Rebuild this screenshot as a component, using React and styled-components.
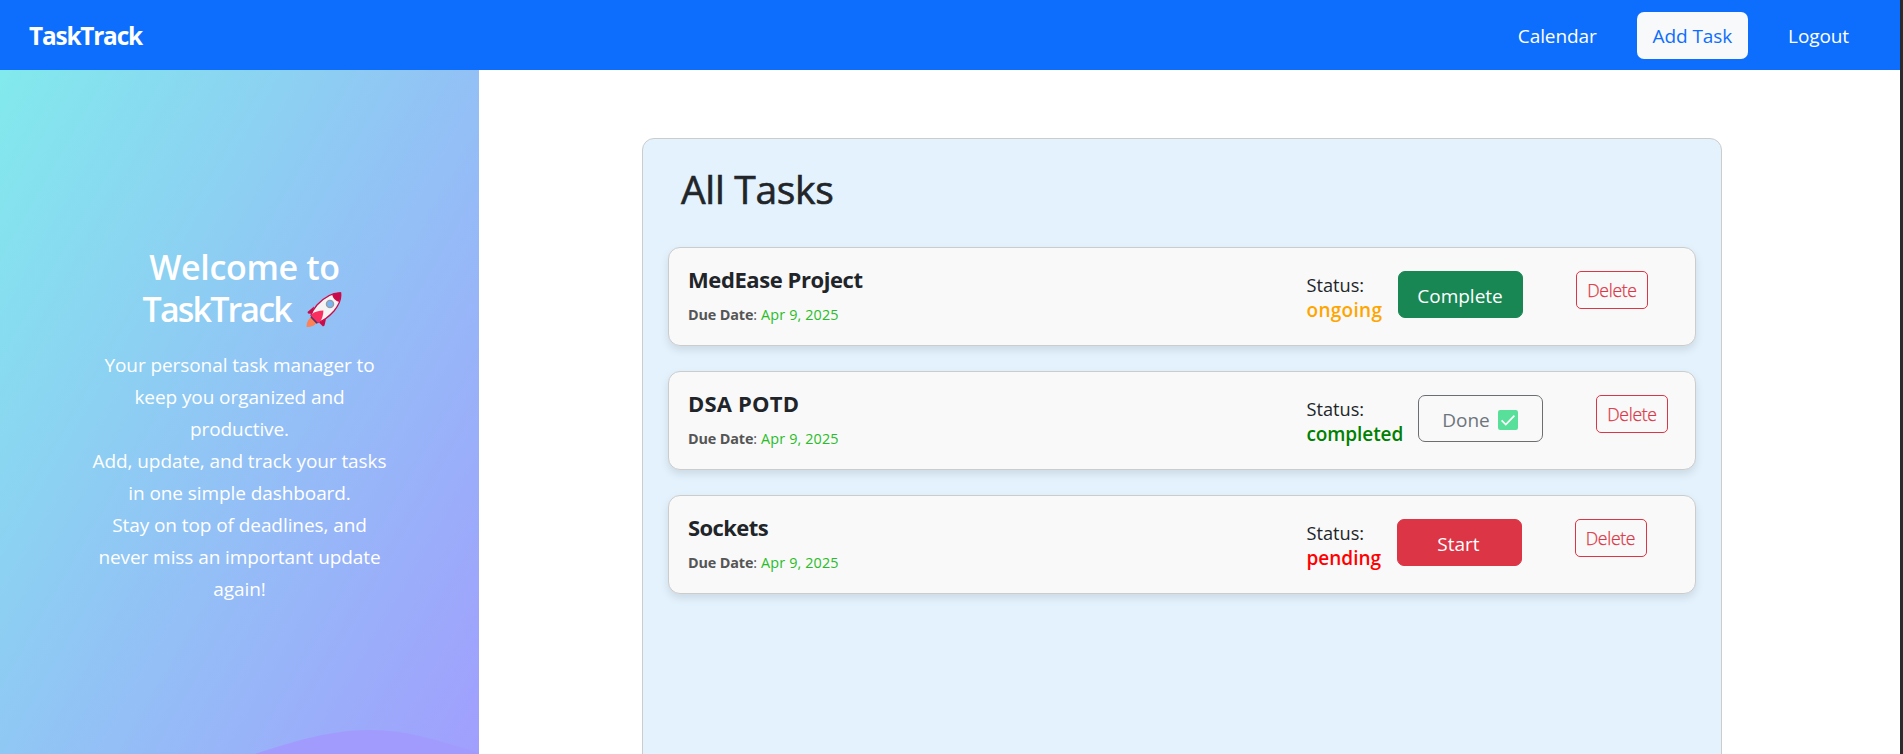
import React from "react";
import styled, { createGlobalStyle } from "styled-components";

const Global = createGlobalStyle`
  *, *::before, *::after { box-sizing: border-box; }
  body {
    margin: 0;
    overflow: hidden;
    background: #fff;
    color: #212529;
    font-family: "Open Sans", "Noto Sans", sans-serif;
  }
  h1, h2, h3, p { margin: 0; }
  button { font-family: inherit; cursor: pointer; }
`;

const Screen = styled.div`
  display: flex;
  height: 100vh;
  overflow: hidden;
  border-right: 3px solid #2b2b2b;
`;

const Page = styled.div`
  flex: 1;
  display: flex;
  flex-direction: column;
`;

const Navbar = styled.nav`
  display: flex;
  justify-content: space-between;
  align-items: center;
  flex: none;
  height: 70px;
  padding: 1px 35px 0 29px;
  background: #0d6efd;
`;

const Brand = styled.span`
  color: #fff;
  font-size: 24.4px;
  font-weight: 700;
  letter-spacing: -1.2px;
`;

const NavLinks = styled.div`
  display: flex;
  align-items: center;
  gap: 24px;
`;

const NavButton = styled.button`
  height: 47px;
  padding: 0 16px;
  border: 0;
  border-radius: 7px;
  font-size: 19px;
  letter-spacing: -0.1px;
  background: ${(p) => (p.$filled ? "#f8f9fa" : "transparent")};
  color: ${(p) => (p.$filled ? "#0d6efd" : "#fff")};
`;

const Body = styled.div`
  flex: 1;
  display: flex;
  min-height: 0;
`;

const Sidebar = styled.aside`
  display: flex;
  flex-direction: column;
  justify-content: space-between;
  align-items: center;
  width: 479px;
  padding-top: 176px;
  background: linear-gradient(120deg, #81ecec -3%, #a29bfe) top / 100% 754px no-repeat;
  color: #fff;
  text-align: center;
`;

const Welcome = styled.h2`
  padding-left: 10px;
  margin-bottom: 19px;
  font-size: 34px;
  font-weight: 600;
  line-height: 42px;
  letter-spacing: -0.35px;
`;

const AppName = styled.span`
  letter-spacing: -1.85px;
`;

const Intro = styled.p`
  font-size: 19px;
  line-height: 32px;
  letter-spacing: -0.08px;
`;

const Rocket = styled.svg`
  width: 36px;
  height: 36px;
  margin: 0 4px 0 7px;
  vertical-align: -6px;
`;

const Wave = styled.svg`
  display: block;
  width: 479px;
  height: 25px;
`;

const Main = styled.main`
  flex: 1;
  display: flex;
  padding: 68px 178px 0 163px;
`;

const Panel = styled.section`
  flex: 1;
  height: 700px;
  padding: 26px 25px 0;
  border: 1px solid #ccc;
  border-radius: 12px;
  background: #e3f2fd;
`;

const PanelTitle = styled.h1`
  margin: 0 0 34px 13px;
  font-size: 39px;
  font-weight: 500;
  line-height: 48px;
  letter-spacing: -0.3px;
  -webkit-text-stroke: 0.6px #212529;
`;

const TaskList = styled.div`
  display: flex;
  flex-direction: column;
  gap: 25px;
`;

const Card = styled.article`
  display: flex;
  justify-content: space-between;
  height: 99px;
  border: 1px solid #ccc;
  border-radius: 12px;
  background: #f9f9f9;
  box-shadow: 0 4px 8px rgba(0, 0, 0, 0.1);
`;

const Info = styled.div`
  padding: 18px 0 0 19px;
`;

const TaskName = styled.h3`
  margin-bottom: 12px;
  font-size: 22px;
  font-weight: 700;
  line-height: 26px;
  letter-spacing: ${(p) => p.$tracking}px;
`;

const Due = styled.p`
  color: #555;
  font-size: 14.4px;
  line-height: 22px;
  letter-spacing: 0.14px;

  b { font-weight: 700; letter-spacing: -0.15px; }
  span { color: #28bd28; }
`;

const Controls = styled.div`
  display: flex;
  align-items: flex-start;
  width: 388.5px;
  padding-top: 23px;
`;

const Status = styled.div`
  width: ${(p) => p.$width}px;
  padding-top: 2px;
  font-size: 18.2px;
  line-height: 25px;

  strong {
    display: block;
    color: ${(p) => p.$color};
    font-size: 19px;
    font-weight: 600;
    letter-spacing: ${(p) => p.$tracking || 0}px;
  }
`;

const ActionButton = styled.button`
  display: flex;
  justify-content: center;
  align-items: center;
  gap: 8px;
  width: 125px;
  height: 47px;
  padding: 2px 1px 0 0;
  border: 1px solid ${(p) => p.$border || p.$bg};
  border-radius: 7px;
  background: ${(p) => p.$bg};
  color: ${(p) => p.$fg || "#fff"};
  font-size: 19px;
`;

const DeleteButton = styled.button`
  width: 72px;
  height: 38px;
  margin-left: 53px;
  padding: 0;
  border: 1px solid #dc3545;
  border-radius: 5px;
  background: transparent;
  color: #dc3545;
  font-size: 17.6px;
  font-weight: 300;
  letter-spacing: -0.3px;
  -webkit-text-stroke: 0.25px #dc3545;
`;

const CheckIcon = () => (
  <svg width="20" height="20" viewBox="0 0 20 20">
    <rect width="20" height="20" rx="2.2" fill="#58e09b" />
    <path d="M3.6 10.4 L7.8 14.5 L16.4 5.6" fill="none" stroke="#fff" strokeWidth="1.7" />
  </svg>
);

const RocketIcon = () => (
  <Rocket viewBox="0 0 36 36">
    <path d="M7 24.5 C2.5 26 .5 30 .6 35 C5.5 35 9.8 33.5 11.5 29 Z" fill="#ff8257" />
    <path d="M8 14.5 L1.5 20 L2 21.5 L7 22 Z M20 27 L18.5 33.5 L17 34.6 L13 30.5 Z" fill="#ca0b4a" />
    <path d="M34.6.9 C26 .5 18 5.5 11 13 C8 16.5 6 20 5 23.4 L12.2 30.5 C18 28.5 23.5 24 28 19 C33 13 35.5 7 34.6.9 Z" fill="#f4f4f4" stroke="#ca0b4a" strokeWidth="1.3" />
    <path d="M34.9.6 C31.5.2 28.5 1.4 26.2 2.7 C27 6.5 30 9.2 33 9.8 C34.8 6.7 35.2 3.5 34.9.6 Z" fill="#ca0b4a" />
    <path d="M5.5 22.5 C8.5 19.5 13 18.8 17.4 18.6 C17.4 23 16 27.5 13.5 30.5 L10.5 31 L5 25.5 Z" fill="#f92f60" />
    <path d="M5.2 24 L12 31 L10.5 31.8 L4.5 25.6 Z" fill="#533566" />
    <circle cx="24" cy="12" r="3.6" fill="#74b5f5" stroke="#9b9b9b" strokeWidth="1.3" />
  </Rocket>
);

const tasks = [
  {
    name: "MedEase Project", tracking: -0.42, status: "ongoing", color: "orange", width: 91.5,
    statusTracking: 0.3, action: "Complete", bg: "#198754",
  },
  {
    name: "DSA POTD", tracking: 0.2, status: "completed", color: "green", width: 111.5,
    statusTracking: -0.1, action: "Done", bg: "transparent", fg: "#6c757d", border: "#6c6f72", done: true,
  },
  {
    name: "Sockets", tracking: -0.6, status: "pending", color: "red", width: 90,
    action: "Start", bg: "#dc3545",
  },
];

const TaskCard = ({ task }) => (
  <Card>
    <Info>
      <TaskName $tracking={task.tracking}>{task.name}</TaskName>
      <Due><b>Due Date</b>: <span>Apr 9, 2025</span></Due>
    </Info>
    <Controls>
      <Status $color={task.color} $width={task.width} $tracking={task.statusTracking}>
        Status: <strong>{task.status}</strong>
      </Status>
      <ActionButton $bg={task.bg} $fg={task.fg} $border={task.border}>
        {task.action}
        {task.done && <CheckIcon />}
      </ActionButton>
      <DeleteButton>Delete</DeleteButton>
    </Controls>
  </Card>
);

export default function App() {
  return (
    <Screen>
      <Global />
      <Page>
        <Navbar>
          <Brand>TaskTrack</Brand>
          <NavLinks>
            <NavButton>Calendar</NavButton>
            <NavButton $filled>Add Task</NavButton>
            <NavButton>Logout</NavButton>
          </NavLinks>
        </Navbar>
        <Body>
          <Sidebar>
            <div>
              <Welcome>Welcome to<br /><AppName>TaskTrack</AppName> <RocketIcon /></Welcome>
              <Intro>
                Your personal task manager to<br />
                keep you organized and<br />
                productive.<br />
                Add, update, and track your tasks<br />
                in one simple dashboard.<br />
                Stay on top of deadlines, and<br />
                never miss an important update<br />
                again!
              </Intro>
            </div>
            <Wave viewBox="0 0 479 25">
              <path d="M255 25 C295 12 330 1 370 1 C410 1 442 13 479 24 V25 Z" fill="#a29bfe" />
            </Wave>
          </Sidebar>
          <Main>
            <Panel>
              <PanelTitle>All Tasks</PanelTitle>
              <TaskList>
                {tasks.map((t) => <TaskCard key={t.name} task={t} />)}
              </TaskList>
            </Panel>
          </Main>
        </Body>
      </Page>
    </Screen>
  );
}
